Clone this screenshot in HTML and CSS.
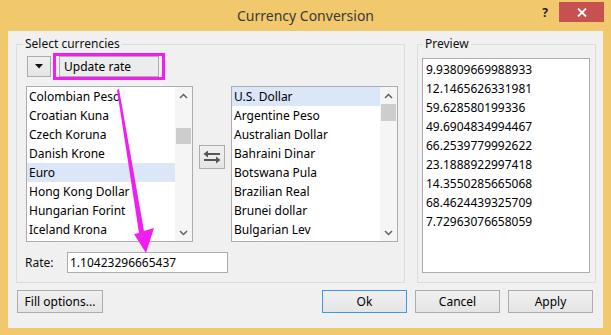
FILE: index.html
```html
<!DOCTYPE html>
<html lang="en">
<head>
  <meta charset="UTF-8">
  <meta name="viewport" content="width=device-width, initial-scale=1.0">
  <title>Currency Conversion</title>
<link rel="stylesheet" href="styles.css">
</head>
<body>
  <div class="window">
    <div class="titlebar">
      <span></span>
      <span class="title">Currency Conversion</span>
      <div class="controls">
        <span class="help">?</span>
        <span class="close">
          <svg width="10" height="9" viewBox="0 0 10 9"><path d="M1 0.5 L9 8.5 M9 0.5 L1 8.5" stroke="#fff" stroke-width="1.8"/></svg>
        </span>
      </div>
    </div>
    <div class="client">
      <div class="groups">
        <fieldset class="group currencies">
          <legend>Select currencies</legend>
          <div class="toolbar">
            <button class="btn drop">
              <svg width="8" height="5" viewBox="0 0 8 5"><path d="M0 0 L8 0 L4 4.5 Z" fill="#111"/></svg>
            </button>
            <div class="mark"><button class="btn update">Update rate</button></div>
          </div>
          <div class="lists">
            <div class="listbox">
              <ul class="items">
                <li>Colombian Peso</li>
                <li>Croatian Kuna</li>
                <li>Czech Koruna</li>
                <li>Danish Krone</li>
                <li class="sel">Euro</li>
                <li>Hong Kong Dollar</li>
                <li>Hungarian Forint</li>
                <li>Iceland Krona</li>
              </ul>
              <div class="scroll">
                <span class="arr"><svg width="9" height="6" viewBox="0 0 9 6"><path d="M1 5 L4.5 1.5 L8 5" fill="none" stroke="#606060" stroke-width="1.5"/></svg></span>
                <div class="track"><div class="thumb left-thumb"></div></div>
                <span class="arr"><svg width="9" height="6" viewBox="0 0 9 6"><path d="M1 1 L4.5 4.5 L8 1" fill="none" stroke="#606060" stroke-width="1.5"/></svg></span>
              </div>
            </div>
            <button class="btn swap">
              <svg width="18" height="14" viewBox="0 0 18 14">
                <path d="M4 4 H17" stroke="#555" stroke-width="2"/>
                <path d="M0.5 4 L5 0.5 L5 7.5 Z" fill="#555"/>
                <path d="M1 10 H14" stroke="#555" stroke-width="2"/>
                <path d="M17.5 10 L13 6.5 L13 13.5 Z" fill="#555"/>
              </svg>
            </button>
            <div class="listbox">
              <ul class="items">
                <li class="sel">U.S. Dollar</li>
                <li>Argentine Peso</li>
                <li>Australian Dollar</li>
                <li>Bahraini Dinar</li>
                <li>Botswana Pula</li>
                <li>Brazilian Real</li>
                <li>Brunei dollar</li>
                <li>Bulgarian Lev</li>
              </ul>
              <div class="scroll">
                <span class="arr"><svg width="9" height="6" viewBox="0 0 9 6"><path d="M1 5 L4.5 1.5 L8 5" fill="none" stroke="#606060" stroke-width="1.5"/></svg></span>
                <div class="track"><div class="thumb"></div></div>
                <span class="arr"><svg width="9" height="6" viewBox="0 0 9 6"><path d="M1 1 L4.5 4.5 L8 1" fill="none" stroke="#606060" stroke-width="1.5"/></svg></span>
              </div>
            </div>
          </div>
          <div class="rate">
            <label>Rate:</label>
            <div class="field">1.10423296665437</div>
          </div>
        </fieldset>
        <fieldset class="group preview">
          <legend>Preview</legend>
          <div class="textbox">
            <div>9.93809669988933</div>
            <div>12.1465626331981</div>
            <div>59.628580199336</div>
            <div>49.6904834994467</div>
            <div>66.2539779992622</div>
            <div>23.1888922997418</div>
            <div>14.3550285665068</div>
            <div>68.4624439325709</div>
            <div>7.72963076658059</div>
          </div>
        </fieldset>
      </div>
      <div class="footer">
        <button class="btn">Fill options...</button>
        <span class="spacer"></span>
        <button class="btn ok">Ok</button>
        <button class="btn">Cancel</button>
        <button class="btn">Apply</button>
      </div>
    </div>
    <svg class="arrow" width="611" height="335" viewBox="0 0 611 335">
      <polygon points="117,90 119,89 144,231 154,228 146,253 134,234 139,233" fill="#f01ef0"/>
    </svg>
  </div>
</body>
</html>
```

FILE: styles.css
```css
*{box-sizing:border-box;}
body{margin:0;font-family:"Noto Sans","Liberation Sans",sans-serif;font-size:12px;color:#000;}

.window{position:relative;width:611px;height:335px;background:#f1c86b;overflow:hidden;}
.titlebar{display:grid;grid-template-columns:1fr auto 1fr;height:31px;align-items:start;}
.title{font-size:14px;color:#3a3a3a;padding-top:6px;}
.controls{display:flex;justify-content:flex-end;align-items:flex-start;}
.help{font-weight:bold;font-size:12px;color:#222;margin-top:4px;margin-right:11px;}
.close{width:45px;height:20px;margin-top:2px;margin-right:7px;background:#c75050;display:flex;align-items:center;justify-content:center;}

.client{margin:0 8px;height:297px;background:#f0f0f0;display:flex;flex-direction:column;}
.groups{display:flex;gap:12px;padding:5px 9px 0 8px;}
.group{margin:0;border:1px solid #dcdcdc;}
.group legend{padding:0 2px;line-height:16px;color:#111;}
.currencies{padding:1px 6px 9px 9px;}
.currencies legend{margin-left:-3px;}
.preview{padding:6px 5px 9px 4px;}
.preview legend{margin-left:1px;}

.btn{font:inherit;color:#000;background:linear-gradient(#f0f0f0,#e5e5e5);border:1px solid #acacac;padding:0;margin:0;}
.toolbar{display:flex;align-items:center;height:27px;}
.drop{width:24px;height:21px;margin-left:1px;display:flex;align-items:center;justify-content:center;}
.mark{height:27px;width:112px;margin-left:2px;border:3px solid #f01ef0;padding-left:3px;display:flex;align-items:center;}
.update{width:100px;height:21px;text-align:left;padding-left:4px;background:#ececec;}

.lists{display:flex;gap:6px;height:156px;margin-top:6px;}
.listbox{width:167px;height:156px;border:1px solid #abadb3;background:#fff;display:flex;}
.items{flex:1;list-style:none;margin:0;padding:0;overflow:hidden;}
.items li{height:19px;line-height:19px;padding-left:2px;white-space:nowrap;}
.items li.sel{background:#dbe6f8;}
.scroll{width:17px;display:flex;flex-direction:column;background:#f5f5f5;}
.arr{height:17px;display:flex;align-items:center;justify-content:center;}
.track{flex:1;}
.thumb{width:15px;height:17px;margin-left:1px;background:#cdcdcd;}
.left-thumb{margin-top:24px;height:16px;}
.swap{align-self:flex-start;margin-top:59px;width:26px;height:24px;display:flex;align-items:center;justify-content:center;}

.rate{display:flex;align-items:center;height:21px;margin-top:10px;}
.rate label{width:42px;margin-left:-1px;color:#111;}
.field{width:161px;height:21px;border:1px solid #abadb3;background:#fff;padding-left:2px;line-height:19px;}

.textbox{width:168px;height:215px;border:1px solid #abadb3;background:#fff;padding:1px 3px;}
.textbox div{line-height:19px;}

.footer{display:flex;gap:8px;padding:7px 10px 0 9px;}
.footer .btn{width:85px;height:23px;}
.footer .btn:first-child{width:86px;}
.spacer{flex:1;}
.footer .ok{border-color:#3c9ae6;}

.arrow{position:absolute;left:0;top:0;pointer-events:none;}
```
